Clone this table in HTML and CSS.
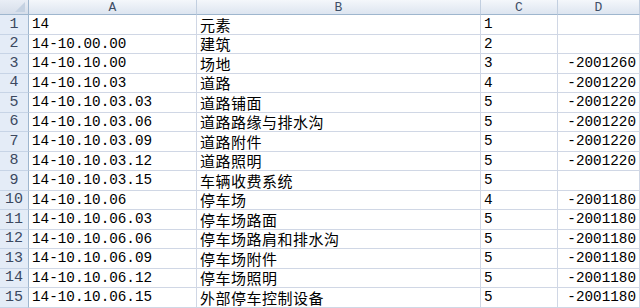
FILE: index.html
```html
<!DOCTYPE html>
<html lang="zh">
<head>
<meta charset="utf-8">
<title>Sheet</title>
<link rel="stylesheet" href="styles.css">
</head>
<body>
<div class="sheet">
  <div class="corner"><span class="tri"></span></div>
  <div class="colhead">A</div>
  <div class="colhead">B</div>
  <div class="colhead">C</div>
  <div class="colhead">D</div>

  <div class="rowhead">1</div><div class="cell num">14</div><div class="cell cjk">元素</div><div class="cell num">1</div><div class="cell num right"></div>
  <div class="rowhead">2</div><div class="cell num">14-10.00.00</div><div class="cell cjk">建筑</div><div class="cell num">2</div><div class="cell num right"></div>
  <div class="rowhead">3</div><div class="cell num">14-10.10.00</div><div class="cell cjk">场地</div><div class="cell num">3</div><div class="cell num right">-2001260</div>
  <div class="rowhead">4</div><div class="cell num">14-10.10.03</div><div class="cell cjk">道路</div><div class="cell num">4</div><div class="cell num right">-2001220</div>
  <div class="rowhead">5</div><div class="cell num">14-10.10.03.03</div><div class="cell cjk">道路铺面</div><div class="cell num">5</div><div class="cell num right">-2001220</div>
  <div class="rowhead">6</div><div class="cell num">14-10.10.03.06</div><div class="cell cjk">道路路缘与排水沟</div><div class="cell num">5</div><div class="cell num right">-2001220</div>
  <div class="rowhead">7</div><div class="cell num">14-10.10.03.09</div><div class="cell cjk">道路附件</div><div class="cell num">5</div><div class="cell num right">-2001220</div>
  <div class="rowhead">8</div><div class="cell num">14-10.10.03.12</div><div class="cell cjk">道路照明</div><div class="cell num">5</div><div class="cell num right">-2001220</div>
  <div class="rowhead">9</div><div class="cell num">14-10.10.03.15</div><div class="cell cjk">车辆收费系统</div><div class="cell num">5</div><div class="cell num right"></div>
  <div class="rowhead">10</div><div class="cell num">14-10.10.06</div><div class="cell cjk">停车场</div><div class="cell num">4</div><div class="cell num right">-2001180</div>
  <div class="rowhead">11</div><div class="cell num">14-10.10.06.03</div><div class="cell cjk">停车场路面</div><div class="cell num">5</div><div class="cell num right">-2001180</div>
  <div class="rowhead">12</div><div class="cell num">14-10.10.06.06</div><div class="cell cjk">停车场路肩和排水沟</div><div class="cell num">5</div><div class="cell num right">-2001180</div>
  <div class="rowhead">13</div><div class="cell num">14-10.10.06.09</div><div class="cell cjk">停车场附件</div><div class="cell num">5</div><div class="cell num right">-2001180</div>
  <div class="rowhead">14</div><div class="cell num">14-10.10.06.12</div><div class="cell cjk">停车场照明</div><div class="cell num">5</div><div class="cell num right">-2001180</div>
  <div class="rowhead">15</div><div class="cell num">14-10.10.06.15</div><div class="cell cjk">外部停车控制设备</div><div class="cell num">5</div><div class="cell num right">-2001180</div>
</div>
</body>
</html>
```
FILE: styles.css
```css
html, body {
  margin: 0;
  padding: 0;
  background: #ffffff;
  overflow: hidden;
}
.sheet {
  display: grid;
  grid-template-columns: 29px 168px 284px 77px 82px;
  grid-template-rows: 15px repeat(15, 19.5px);
  width: 640px;
  height: 308px;
  font-family: "Liberation Mono", "Noto Sans CJK SC", monospace;
  color: #000;
}
.corner {
  position: relative;
  background: linear-gradient(#e9eef6, #d6deea);
  border-right: 1px solid #9eb6ce;
  border-bottom: 1px solid #9eb6ce;
}
.tri {
  position: absolute;
  right: 3px;
  bottom: 2px;
  width: 0;
  height: 0;
  border-left: 10px solid transparent;
  border-bottom: 10px solid #c5d2e2;
}
.colhead {
  display: flex;
  align-items: center;
  justify-content: center;
  background: linear-gradient(#f4f7fb, #dde5f0);
  border-right: 1px solid #c2cfe0;
  border-bottom: 1px solid #9eb6ce;
  font-family: "Liberation Mono", monospace;
  font-size: 13px;
  color: #3f4e66;
  line-height: 1;
  padding-top: 1px;
}
.rowhead {
  display: flex;
  align-items: flex-end;
  justify-content: center;
  background: #e4ecf7;
  border-right: 1px solid #9eb6ce;
  border-bottom: 1px solid #c7d4e6;
  font-family: "Liberation Mono", monospace;
  font-size: 15px;
  color: #3b4860;
  line-height: 1;
  padding-bottom: 2px;
}
.cell {
  display: flex;
  align-items: flex-end;
  border-right: 1px solid #d0d7e5;
  border-bottom: 1px solid #d0d7e5;
  padding: 0 3px 2px 3px;
  white-space: nowrap;
  overflow: hidden;
  line-height: 1;
  min-width: 0;
}
.num {
  font-family: "Liberation Mono", monospace;
  font-size: 14.3px;
}
.cjk {
  font-family: "Noto Sans CJK SC", sans-serif;
  font-size: 15px;
  letter-spacing: 0.5px;
  padding-bottom: 2px;
}
.right {
  justify-content: flex-end;
}
```
